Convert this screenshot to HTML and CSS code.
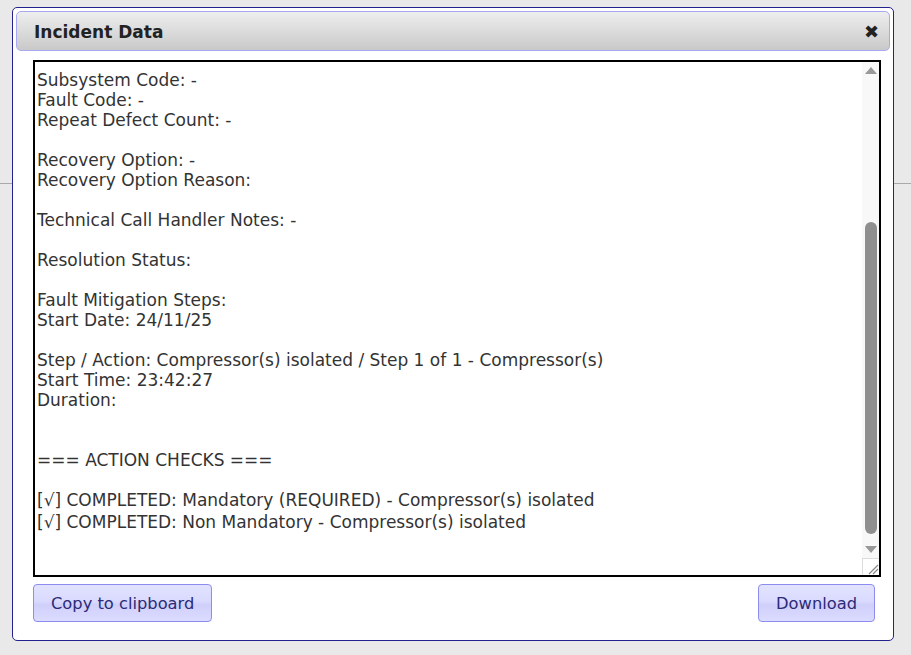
FILE: index.html
```html
<!DOCTYPE html>
<html lang="en">
<head>
  <meta charset="UTF-8" />
  <title>Incident Data</title>
  <link rel="stylesheet" href="styles.css">
</head>
<body>
  <div class="backdrop-line"></div>
  <div class="dialog">
    <div class="titlebar">
      <span class="title">Incident Data</span>
      <span class="close">&#10006;</span>
    </div>
    <div class="report">
      <div class="report-text">Subsystem Code: -
Fault Code: -
Repeat Defect Count: -

Recovery Option: -
Recovery Option Reason: 

Technical Call Handler Notes: -

Resolution Status: 

Fault Mitigation Steps:
Start Date: 24/11/25

Step / Action: Compressor(s) isolated / Step 1 of 1 - Compressor(s)
Start Time: 23:42:27
Duration: 


=== ACTION CHECKS ===
&nbsp;</div>
      <div class="checks">[&#8730;] COMPLETED: Mandatory (REQUIRED) - Compressor(s) isolated
[&#8730;] COMPLETED: Non Mandatory - Compressor(s) isolated</div>
      <div class="scrollbar">
        <div class="arrow up"></div>
        <div class="track"><div class="thumb"></div></div>
        <div class="arrow down"></div>
        <div class="grip">
          <svg width="17" height="17" viewBox="0 0 17 17">
            <path d="M6 15 L15 6 M10 15 L15 10" stroke="#888" stroke-width="1.2" fill="none"/>
          </svg>
        </div>
      </div>
    </div>
    <div class="actions">
      <button class="btn">Copy to clipboard</button>
      <button class="btn">Download</button>
    </div>
  </div>
</body>
</html>
```

FILE: styles.css
```css
* { margin: 0; padding: 0; box-sizing: border-box; }
body {
  font-family: "DejaVu Sans", Verdana, sans-serif;
  background: #e9e9e9;
  width: 911px;
  height: 655px;
  overflow: hidden;
  position: relative;
}
.backdrop-line {
  position: absolute;
  top: 183px;
  left: 0;
  width: 100%;
  height: 1px;
  background: #a9a9a9;
}
.dialog {
  position: relative;
  margin: 7px 0 0 12px;
  width: 882px;
  height: 634px;
  background: #fff;
  border: 1px solid #232390;
  border-radius: 5px;
  padding: 3px;
  display: flex;
  flex-direction: column;
}
.titlebar {
  height: 40px;
  border: 1px solid #a9a9f2;
  border-radius: 5px;
  background: linear-gradient(#eeeeee, #c9c9c9);
  display: flex;
  align-items: center;
  justify-content: space-between;
  padding: 1px 10px 0 17px;
}
.title {
  font-weight: bold;
  font-size: 17px;
  color: #222;
}
.close {
  font-size: 18px;
  font-weight: bold;
  color: #222;
}
.report {
  position: relative;
  margin: 9px 9px 0 17px;
  height: 517px;
  border: 2px solid #000;
  overflow: hidden;
  padding: 8px 20px 0 2px;
  font-size: 17px;
  color: #333;
}
.report-text {
  white-space: pre-wrap;
  line-height: 20px;
}
.checks {
  white-space: pre-wrap;
  line-height: 22px;
  margin-top: -1px;
}
.scrollbar {
  position: absolute;
  top: 0;
  right: 0;
  width: 17px;
  height: 100%;
  background: #f8f8f8;
  display: flex;
  flex-direction: column;
}
.arrow {
  height: 17px;
  display: flex;
  justify-content: center;
  align-items: center;
}
.arrow::before {
  content: '';
  border-left: 6px solid transparent;
  border-right: 6px solid transparent;
}
.arrow.up::before { border-bottom: 7px solid #999; }
.arrow.down::before { border-top: 7px solid #999; }
.track {
  flex: 1;
  position: relative;
}
.thumb {
  position: absolute;
  left: 3px;
  right: 2px;
  top: 143px;
  height: 312px;
  background: #8f8f8f;
  border-radius: 6px;
}
.grip {
  height: 17px;
  background: #fff;
  border-left: 1px solid #ddd;
  border-top: 1px solid #ddd;
}
.grip svg { display: block; }
.actions {
  display: flex;
  justify-content: space-between;
  margin: 7px 15px 0 17px;
}
.btn {
  font-family: "DejaVu Sans", Verdana, sans-serif;
  font-size: 16.3px;
  color: #2b2b78;
  height: 38px;
  padding: 0 17px;
  border: 1px solid #8d8df0;
  border-radius: 4px;
  background: linear-gradient(#e2e2ff 0%, #dadaff 45%, #cfcffb 55%, #dcdcff 100%);
}
```
